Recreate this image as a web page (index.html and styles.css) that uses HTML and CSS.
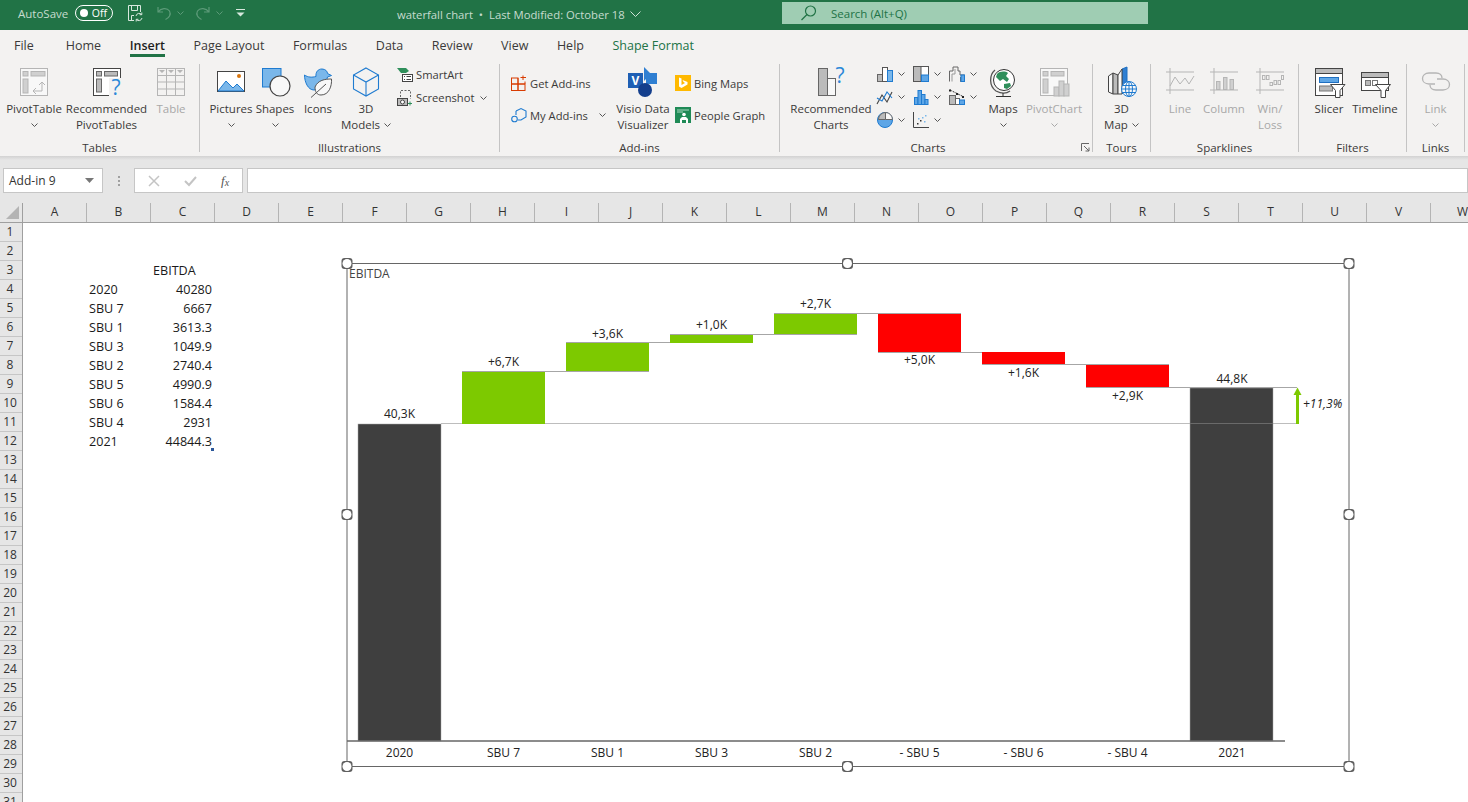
FILE: index.html
```html
<!DOCTYPE html>
<html>

<head lang="en">
    <meta charset="UTF-8">
    <title>waterfall chart</title>
    <link rel="stylesheet" href="styles.css">
</head>

<body>
    <!-- title bar -->
    <div class="titlebar">
        <div class="qat">
            <span class="autosave">AutoSave</span>
            <span class="toggle"><span class="knob"></span><span class="toggle-text">Off</span></span>
            <svg class="qat-save" width="18" height="18" viewBox="0 0 18 18" fill="none" stroke="#d8e8de"><path d="M2.500 1.500H14.500V8M2.500 1.500V16.500H8M5.500 1.500V6.500H11.500V1.500M5.500 16.500V11.500H8"/><path d="M10 12a3.200 3.200 0 0 1 5.600-1.500M16 14a3.200 3.200 0 0 1-5.600 1.500M15.800 8.500v2.200h-2.200M10.200 17.500v-2.200h2.200"/></svg>
            <svg class="qat-undo" width="16" height="16" viewBox="0 0 16 16" fill="none" stroke="#5c9a78" stroke-width="1.2"><path d="M2 2V7H7M2 7C5 3 11 2.500 13.500 6C15.500 9.500 13 13 9.500 14.500"/></svg>
            <svg class="chev-dim" width="7" height="4" viewBox="0 0 7 4" fill="none" stroke="#5c9a78"><path d="M.5.5l3 3 3-3"/></svg>
            <svg class="qat-redo" width="16" height="16" viewBox="0 0 16 16" fill="none" stroke="#5c9a78" stroke-width="1.2"><path d="M14 2V7H9M14 7C11 3 5 2.500 2.500 6C.5 9.500 3 13 6.500 14.500"/></svg>
            <svg class="chev-dim" width="7" height="4" viewBox="0 0 7 4" fill="none" stroke="#5c9a78"><path d="M.5.5l3 3 3-3"/></svg>
            <svg class="qat-more" width="9" height="8" viewBox="0 0 9 8"><path d="M0 .5H9" stroke="#d8e8de"/><path d="M.5 3.500H8.500L4.500 7.500Z" fill="#d8e8de"/></svg>
        </div>
        <div class="doc-title">
            <span>waterfall chart &nbsp;&#8226;&nbsp; Last Modified: October 18</span>
            <svg width="11" height="6" viewBox="0 0 11 6" fill="none" stroke="#cfe2d7"><path d="M.5.5l5 5 5-5"/></svg>
        </div>
        <div class="search">
            <svg width="18" height="18" viewBox="0 0 18 18" fill="none" stroke="#217346" stroke-width="1.2"><circle cx="10.500" cy="7" r="5"/><path d="M7 10.500L1.500 16"/></svg>
            <span>Search (Alt+Q)</span>
        </div>
    </div>

    <!-- tabs -->
    <div class="tabs">
        <span class="tab tab-file">File</span>
        <span class="tab">Home</span>
        <span class="tab tab-active">Insert</span>
        <span class="tab">Page Layout</span>
        <span class="tab">Formulas</span>
        <span class="tab">Data</span>
        <span class="tab">Review</span>
        <span class="tab">View</span>
        <span class="tab">Help</span>
        <span class="tab tab-green">Shape Format</span>
    </div>

    <!-- ribbon -->
    <div class="ribbon">
        <div class="group group-tables">
            <div class="group-body">
                <div class="btn w-pivot">
                    <svg width="32" height="32" viewBox="0 0 32 32"><rect x="2.500" y="2.500" width="27" height="27" fill="#f8f8f8" stroke="#b5b5b5"/><rect x="5" y="5.500" width="5" height="4.500" fill="#d0d0d0" stroke="#b5b5b5"/><rect x="13" y="5.500" width="14" height="4.500" fill="#d0d0d0" stroke="#b5b5b5"/><rect x="5" y="13" width="5" height="14" fill="#d0d0d0" stroke="#b5b5b5"/><path d="M15 25H24V16M21 19l3-3 3 3M18 22l-3 3 3 3" fill="none" stroke="#b5b5b5"/></svg>
                    <span class="label">PivotTable</span>
                    <span class="label"><svg class="chev" width="7" height="4" viewBox="0 0 7 4"><path d="M.5.5l3 3 3-3"/></svg></span>
                </div>
                <div class="btn w-recpivot">
                    <svg width="32" height="32" viewBox="0 0 32 32"><rect x="2.500" y="2.500" width="27" height="27" fill="#fff" stroke="#444"/><rect x="5.500" y="5.500" width="5" height="4.500" fill="#bbb" stroke="#666"/><rect x="13.500" y="5.500" width="13" height="4.500" fill="#bbb" stroke="#666"/><rect x="5.500" y="13" width="5" height="13" fill="#bbb" stroke="#666"/><rect x="18" y="12" width="14" height="20" fill="#f3f2f1"/><text x="25" y="29" class="qmark">?</text></svg>
                    <span class="label">Recommended</span>
                    <span class="label">PivotTables</span>
                </div>
                <div class="btn w-table off">
                    <svg width="32" height="32" viewBox="0 0 32 32" fill="none" stroke="#b5b5b5"><rect x="2.500" y="2.500" width="27" height="27"/><path d="M2.500 9.500H29.500M2.500 16H29.500M2.500 23H29.500M11.500 2.500V29.500M20.500 2.500V29.500"/><path d="M4 4h6l-3 3zM13 4h6l-3 3zM22 4h6l-3 3z" fill="#b5b5b5" stroke="none"/></svg>
                    <span class="label">Table</span>
                </div>
            </div>
            <div class="group-name">Tables</div>
        </div>

        <div class="group group-illus">
            <div class="group-body">
                <div class="btn w-pictures">
                    <svg width="32" height="32" viewBox="0 0 32 32"><rect x="2.500" y="5.500" width="27" height="20" fill="#fff" stroke="#444"/><path d="M3 25L11 15L18 22L22 18L29 25Z" fill="#7ab7ea" stroke="#1f7bd0"/><circle cx="24" cy="10" r="2" fill="#d9760f"/></svg>
                    <span class="label">Pictures</span>
                    <span class="label"><svg class="chev" width="7" height="4" viewBox="0 0 7 4"><path d="M.5.5l3 3 3-3"/></svg></span>
                </div>
                <div class="btn w-shapes">
                    <svg width="32" height="32" viewBox="0 0 32 32"><rect x="3.500" y="2.500" width="18.500" height="18.500" fill="#7ab7ea" stroke="#1f7bd0"/><circle cx="21" cy="20" r="10" fill="#f8f8f8" stroke="#444" stroke-width="1.200"/></svg>
                    <span class="label">Shapes</span>
                    <span class="label"><svg class="chev" width="7" height="4" viewBox="0 0 7 4"><path d="M.5.5l3 3 3-3"/></svg></span>
                </div>
                <div class="btn w-icons">
                    <svg width="32" height="32" viewBox="0 0 32 32"><path d="M2.500 9C6 11.500 10 11.500 14 10.500C13.500 6 16 3 20 3C23.500 3 25.500 5.500 25.500 7.500L29.500 9.500L25.500 11C24.500 16 20 24 12 24C6 24 2.500 16 2.500 9Z" fill="#7ab7ea" stroke="#1f7bd0"/><path d="M13 21C16 14 23 13 29.500 13C30 20 27 29 19 29C15 29 13 26 13 21Z" fill="#f8f8f8" stroke="#555"/><path d="M9 31.500L24 18" stroke="#555" fill="none"/></svg>
                    <span class="label">Icons</span>
                </div>
                <div class="btn w-models">
                    <svg width="32" height="32" viewBox="0 0 32 32" fill="none" stroke="#1f7bd0" stroke-width="1.100"><path d="M16 2L28.500 9V23L16 30L3.500 23V9Z"/><path d="M3.500 9L16 16L28.500 9M16 16V30"/></svg>
                    <span class="label">3D</span>
                    <span class="label">Models <svg class="chev" width="7" height="4" viewBox="0 0 7 4"><path d="M.5.5l3 3 3-3"/></svg></span>
                </div>
                <div class="small-col small-illus">
                    <div class="small">
                        <svg width="16" height="16" viewBox="0 0 16 16"><path d="M0 1H9L12 4L9 6H4L0 1Z" fill="#2f8f5b"/><rect x="5.500" y="7.500" width="10" height="7" fill="#fff" stroke="#444"/><path d="M7 9.500h1M9.500 9.500H14M7 12.500h1M9.500 12.500H14" stroke="#444"/></svg>
                        <span>SmartArt</span>
                    </div>
                    <div class="small">
                        <svg width="16" height="16" viewBox="0 0 16 16" fill="none"><path d="M3.500 7V.5H13.500V9" stroke="#666" stroke-dasharray="2 1.500"/><rect x=".5" y="8.500" width="10" height="7" fill="#bbb" stroke="#444"/><circle cx="5.500" cy="12" r="2" fill="#fff" stroke="#444"/><path d="M13 11.500V15.500M11 13.500H15" stroke="#2f8f5b"/></svg>
                        <span>Screenshot</span>
                        <svg class="chev" width="7" height="4" viewBox="0 0 7 4"><path d="M.5.5l3 3 3-3"/></svg>
                    </div>
                </div>
            </div>
            <div class="group-name">Illustrations</div>
        </div>

        <div class="group group-addins">
            <div class="group-body">
                <div class="small-col small-addins w-myadd">
                    <div class="small">
                        <svg width="16" height="16" viewBox="0 0 16 16" fill="none" stroke="#d83b01"><rect x=".5" y="3" width="6.500" height="6"/><rect x="7" y="9" width="7" height="6.500"/><rect x=".5" y="9" width="6.500" height="6.500"/><path d="M7 3V9H14V6.500M12 .5V5M9.500 2.500H15"/></svg>
                        <span>Get Add-ins</span>
                    </div>
                    <div class="small">
                        <svg width="16" height="16" viewBox="0 0 16 16" fill="none" stroke="#1f7bd0" stroke-width="1.100"><path d="M5 4L10 1.500L15 4V10L10 13H7"/><path d="M5 4V8"/><circle cx="3.500" cy="12" r="2.800"/></svg>
                        <span>My Add-ins</span>
                        <svg class="chev chev-add" width="7" height="4" viewBox="0 0 7 4"><path d="M.5.5l3 3 3-3"/></svg>
                    </div>
                </div>
                <div class="btn w-visio">
                    <svg width="32" height="32" viewBox="0 0 32 32"><path d="M17 1L24 8L17 15Z" fill="#2f7fd2"/><rect x="19" y="7" width="11" height="11" fill="#2f7fd2"/><rect x="1" y="7" width="15" height="15" fill="#1e5fb4"/><circle cx="18" cy="24" r="7" fill="#133e8c"/><text x="8.500" y="19" class="visio-v">V</text></svg>
                    <span class="label">Visio Data</span>
                    <span class="label">Visualizer</span>
                </div>
                <div class="small-col small-addins small-right">
                    <div class="small">
                        <svg width="16" height="16" viewBox="0 0 16 16"><rect width="16" height="16" fill="#ffb900"/><path d="M4 2.500L6.500 3.500V10L10 8L8.500 7L7.500 5L12.500 7V9.500L6.500 13L4 11.500Z" fill="#fff"/></svg>
                        <span>Bing Maps</span>
                    </div>
                    <div class="small">
                        <svg width="16" height="16" viewBox="0 0 16 16"><rect width="16" height="16" fill="#1f8a56"/><path d="M2 3H14M2 5H8" stroke="#a9d8bf"/><circle cx="9" cy="7.500" r="1.800" fill="#fff"/><path d="M5 16V12L7 10H11L13 12V16H11V13H7V16Z" fill="#fff"/></svg>
                        <span>People Graph</span>
                    </div>
                </div>
            </div>
            <div class="group-name">Add-ins</div>
        </div>

        <div class="group group-charts">
            <div class="group-body">
                <div class="btn w-recchart">
                    <svg width="32" height="32" viewBox="0 0 32 32"><rect x="3.500" y="2.500" width="9" height="27" fill="#bbb" stroke="#666"/><rect x="12.500" y="12.500" width="8" height="17" fill="#f8f8f8" stroke="#666"/><text x="25" y="17" class="qmark">?</text></svg>
                    <span class="label">Recommended</span>
                    <span class="label">Charts</span>
                </div>
                <div class="chart-grid">
                    <div class="mini">
                        <svg width="16" height="16" viewBox="0 0 16 16"><rect x=".5" y="8.500" width="5" height="7" fill="#bbb" stroke="#666"/><rect x="5.500" y="1.500" width="5" height="14" fill="#fff" stroke="#555"/><rect x="10.500" y="4.500" width="5" height="11" fill="#7ab7ea" stroke="#1f7bd0"/></svg>
                        <svg class="chev" width="7" height="4" viewBox="0 0 7 4"><path d="M.5.5l3 3 3-3"/></svg>
                    </div>
                    <div class="mini">
                        <svg width="16" height="16" viewBox="0 0 16 16"><rect x=".5" y=".5" width="15" height="15" fill="#fff" stroke="#555"/><rect x="1" y="1" width="7" height="14" fill="#bbb"/><path d="M8 .5V15.500" stroke="#555"/><rect x="8.500" y="9" width="7" height="6.500" fill="#5ea6e6" stroke="#1f7bd0"/></svg>
                        <svg class="chev" width="7" height="4" viewBox="0 0 7 4"><path d="M.5.5l3 3 3-3"/></svg>
                    </div>
                    <div class="mini">
                        <svg width="16" height="16" viewBox="0 0 16 16" fill="none"><path d="M.5 15.500V5H4V1H9V5H11V9H15.500V15.500H11.500V11" stroke="#666"/><path d="M3 15.500V8H6V3" stroke="#999"/><rect x="12" y="9" width="3.500" height="6.500" fill="#5ea6e6" stroke="#1f7bd0"/></svg>
                        <svg class="chev" width="7" height="4" viewBox="0 0 7 4"><path d="M.5.5l3 3 3-3"/></svg>
                    </div>
                    <div class="mini">
                        <svg width="16" height="16" viewBox="0 0 16 16" fill="none"><path d="M0 15L5 6L10 13L15 3" stroke="#444" stroke-width="1.100"/><path d="M0 9L5 12L10 3L15 9" stroke="#1f7bd0" stroke-width="1.100"/><path d="M5 6v.1M10 13v.1M15 3v.1" stroke="#222" stroke-width="2"/></svg>
                        <svg class="chev" width="7" height="4" viewBox="0 0 7 4"><path d="M.5.5l3 3 3-3"/></svg>
                    </div>
                    <div class="mini">
                        <svg width="16" height="16" viewBox="0 0 16 16" fill="#5ea6e6" stroke="#1f7bd0"><rect x="1.500" y="8.500" width="3.500" height="7"/><rect x="5" y="1.500" width="3.500" height="14"/><rect x="8.500" y="5.500" width="3.500" height="10"/><rect x="12" y="10.500" width="3" height="5"/></svg>
                        <svg class="chev" width="7" height="4" viewBox="0 0 7 4"><path d="M.5.5l3 3 3-3"/></svg>
                    </div>
                    <div class="mini">
                        <svg width="16" height="16" viewBox="0 0 16 16" fill="none"><rect x=".5" y="6.500" width="6" height="9" fill="#bbb" stroke="#666"/><rect x="6.500" y="9.500" width="4" height="6" fill="#fff" stroke="#666"/><rect x="10.500" y="11" width="5" height="4.500" fill="#5ea6e6" stroke="#1f7bd0"/><path d="M1 1L15 8" stroke="#333" stroke-dasharray="2 1"/><path d="M1 .5v2M8 4v2M14 7v2" stroke="#222" stroke-width="2"/></svg>
                        <svg class="chev" width="7" height="4" viewBox="0 0 7 4"><path d="M.5.5l3 3 3-3"/></svg>
                    </div>
                    <div class="mini">
                        <svg width="16" height="16" viewBox="0 0 16 16"><circle cx="8" cy="8" r="7.500" fill="#5ea6e6" stroke="#1f7bd0"/><path d="M8.500 7.500V.5A7 7 0 0 0 1.500 7.500Z" fill="#bbb" stroke="#666"/><path d="M8.500 7.500V.5A7 7 0 0 1 15.500 7.500Z" fill="#f8f8f8" stroke="#666"/></svg>
                        <svg class="chev" width="7" height="4" viewBox="0 0 7 4"><path d="M.5.5l3 3 3-3"/></svg>
                    </div>
                    <div class="mini">
                        <svg width="16" height="16" viewBox="0 0 16 16"><path d="M.5 0V15.500H16" fill="none" stroke="#444"/><path d="M4 11h1.500v1.500H4zM7 8h1.500v1.500H7z" fill="#333"/><path d="M9 5h1.500v1.500H9zM12 3h1.500v1.500H12zM11 9h1.500v1.500H11zM5 6h1.500v1.500H5z" fill="#7ab7ea"/></svg>
                        <svg class="chev" width="7" height="4" viewBox="0 0 7 4"><path d="M.5.5l3 3 3-3"/></svg>
                    </div>
                </div>
                <div class="btn w-maps">
                    <svg width="32" height="32" viewBox="0 0 32 32"><circle cx="17" cy="14" r="10.500" fill="#fff" stroke="#333"/><path d="M10 8C13 5 18 5 21 7L19 10L22 13L20 16L16 13L13 15L9 11Z" fill="#2f8f5b"/><path d="M17 18L23 17L24 20L20 23L17 22Z" fill="#2f8f5b"/><path d="M8 4C2 9 2 20 9 25C13 27 19 28 23 25" fill="none" stroke="#555" stroke-width="1.300"/><path d="M16 27V30M9 30.500H24" stroke="#333"/></svg>
                    <span class="label">Maps</span>
                    <span class="label"><svg class="chev" width="7" height="4" viewBox="0 0 7 4"><path d="M.5.5l3 3 3-3"/></svg></span>
                </div>
                <div class="btn w-pivchart off">
                    <svg width="32" height="32" viewBox="0 0 32 32"><rect x="2.500" y="2.500" width="27" height="27" fill="#f8f8f8" stroke="#b5b5b5"/><rect x="5" y="5.500" width="5" height="4.500" fill="#d0d0d0" stroke="#b5b5b5"/><rect x="13" y="5.500" width="13" height="4.500" fill="#d0d0d0" stroke="#b5b5b5"/><rect x="5" y="13" width="5" height="14" fill="#d0d0d0" stroke="#b5b5b5"/><rect x="16" y="21" width="5" height="9" fill="#d0d0d0" stroke="#b5b5b5"/><rect x="21" y="15" width="5" height="15" fill="#d0d0d0" stroke="#b5b5b5"/><rect x="26" y="18" width="5" height="12" fill="#d0d0d0" stroke="#b5b5b5"/></svg>
                    <span class="label">PivotChart</span>
                    <span class="label"><svg class="chev" width="7" height="4" viewBox="0 0 7 4"><path d="M.5.5l3 3 3-3"/></svg></span>
                </div>
            </div>
            <div class="group-name">Charts</div>
            <svg class="launcher" width="9" height="9" viewBox="0 0 9 9" fill="none" stroke="#666"><path d="M.5 8V.5H8M3 3L8 8M8 4.500V8H4.500"/></svg>
        </div>

        <div class="group group-tours">
            <div class="group-body">
                <div class="btn w-3dmap">
                    <svg width="32" height="32" viewBox="0 0 32 32"><path d="M2.500 10L7 7V28L2.500 26Z" fill="#f8f8f8" stroke="#444"/><path d="M7 7L12 9V28L7 28Z" fill="#bbb" stroke="#444"/><path d="M16 3L21 1V22L16 28Z" fill="#2f7fd2" stroke="#1f6fc0"/><path d="M12 9L16 3V28H12Z" fill="#f8f8f8" stroke="#444"/><circle cx="23" cy="23" r="7.500" fill="#f8f8f8" stroke="#1f7bd0"/><path d="M15.500 23H30.500M16.500 19.500H29.500M16.500 26.500H29.500M23 15.500V30.500" stroke="#1f7bd0" fill="none"/><ellipse cx="23" cy="23" rx="3.500" ry="7.500" fill="none" stroke="#1f7bd0"/></svg>
                    <span class="label">3D</span>
                    <span class="label">Map <svg class="chev" width="7" height="4" viewBox="0 0 7 4"><path d="M.5.5l3 3 3-3"/></svg></span>
                </div>
            </div>
            <div class="group-name">Tours</div>
        </div>

        <div class="group group-spark">
            <div class="group-body">
                <div class="btn w-line off">
                    <svg width="32" height="32" viewBox="0 0 32 32" fill="none" stroke="#b5b5b5"><path d="M6 2V28M2 6H30M2 24H30"/><path d="M6 20L11 11L16 18L21 12L25 18L30 10"/></svg>
                    <span class="label">Line</span>
                </div>
                <div class="btn w-column off">
                    <svg width="32" height="32" viewBox="0 0 32 32" fill="none" stroke="#b5b5b5"><path d="M6 2V28M2 6H30M2 24H30"/><rect x="8.500" y="15.500" width="3.500" height="8" fill="#d0d0d0"/><rect x="15.500" y="11.500" width="3.500" height="12" fill="#d0d0d0"/><rect x="22" y="13.500" width="3.500" height="10" fill="#d0d0d0"/></svg>
                    <span class="label">Column</span>
                </div>
                <div class="btn w-winloss off">
                    <svg width="32" height="32" viewBox="0 0 32 32" fill="none" stroke="#b5b5b5"><path d="M6 2V28M2 6H30M2 24H30"/><rect x="8.500" y="9.500" width="2.500" height="4"/><rect x="12.500" y="9.500" width="2.500" height="4"/><rect x="16" y="16.500" width="2.500" height="3"/><rect x="20" y="14.500" width="2.500" height="4"/><rect x="24" y="14.500" width="2.500" height="4"/><rect x="27.500" y="9.500" width="2" height="4"/></svg>
                    <span class="label">Win/</span>
                    <span class="label">Loss</span>
                </div>
            </div>
            <div class="group-name">Sparklines</div>
        </div>

        <div class="group group-filters">
            <div class="group-body">
                <div class="btn w-slicer">
                    <svg width="32" height="32" viewBox="0 0 32 32"><rect x="2.500" y="2.500" width="27" height="27" fill="#fff" stroke="#444"/><rect x="3" y="3" width="26" height="4" fill="#bbb"/><path d="M2.500 7.500H29.500" stroke="#444"/><rect x="6.500" y="11.500" width="19" height="5" fill="#5ea6e6" stroke="#1f6fc0"/><rect x="6.500" y="20" width="13" height="5" fill="#bbb" stroke="#777"/><path d="M17.500 18.500H32L27 24.500V31.500H22.500V24.500Z" fill="#fff" stroke="#444"/></svg>
                    <span class="label">Slicer</span>
                </div>
                <div class="btn w-timeline">
                    <svg width="32" height="32" viewBox="0 0 32 32"><rect x="2.500" y="6.500" width="27" height="18" fill="#fff" stroke="#444"/><rect x="3" y="7" width="26" height="4" fill="#bbb"/><path d="M2.500 11.500H29.500" stroke="#444"/><rect x="6.500" y="14.500" width="5" height="5" fill="#bbb" stroke="#777"/><rect x="13.500" y="14.500" width="5" height="5" fill="#fff" stroke="#777"/><path d="M16.500 18.500H31.500L26.500 24.500V31.500H22V24.500Z" fill="#fff" stroke="#444"/></svg>
                    <span class="label">Timeline</span>
                </div>
            </div>
            <div class="group-name">Filters</div>
        </div>

        <div class="group group-links">
            <div class="group-body">
                <div class="btn w-link off">
                    <svg width="32" height="32" viewBox="0 0 32 32" fill="none" stroke="#b5b5b5" stroke-width="1.300"><path d="M15 18H9C5 18 2.500 15.500 2.500 12.500C2.500 9.500 5 7 9 7H16C20 7 22 9.500 22 12"/><path d="M17 13H23C27 13 29.500 15.500 29.500 18.500C29.500 21.500 27 24 23 24H16C12 24 10 21.500 10 19"/></svg>
                    <span class="label">Link</span>
                    <span class="label"><svg class="chev" width="7" height="4" viewBox="0 0 7 4"><path d="M.5.5l3 3 3-3"/></svg></span>
                </div>
            </div>
            <div class="group-name">Links</div>
        </div>
    </div>
    <div class="ribbon-shadow"></div>

    <!-- formula bar -->
    <div class="formula-row">
        <div class="namebox">
            <span>Add-in 9</span>
            <svg width="9" height="5" viewBox="0 0 9 5"><path d="M0 0H9L4.500 5Z" fill="#777"/></svg>
        </div>
        <div class="grip"><i></i><i></i><i></i></div>
        <div class="fx-box">
            <svg width="12" height="12" viewBox="0 0 12 12" fill="none" stroke="#c4c4c4" stroke-width="1.500"><path d="M1 1L11 11M11 1L1 11"/></svg>
            <svg width="13" height="12" viewBox="0 0 13 12" fill="none" stroke="#c4c4c4" stroke-width="2"><path d="M1 6L5 10L12 2"/></svg>
            <span class="fx">f<sub>x</sub></span>
        </div>
        <div class="formula-input"></div>
    </div>

    <!-- sheet -->
    <div class="col-heads">
        <div class="corner"><svg width="13" height="13" viewBox="0 0 13 13"><path d="M13 0V13H0Z" fill="#b4b4b4"/></svg></div>
        <span class="col">A</span><span class="col">B</span><span class="col">C</span><span class="col">D</span><span class="col">E</span><span class="col">F</span><span class="col">G</span><span class="col">H</span><span class="col">I</span><span class="col">J</span><span class="col">K</span><span class="col">L</span><span class="col">M</span><span class="col">N</span><span class="col">O</span><span class="col">P</span><span class="col">Q</span><span class="col">R</span><span class="col">S</span><span class="col">T</span><span class="col">U</span><span class="col">V</span><span class="col">W</span>
    </div>
    <div class="sheet">
        <div class="row-heads">
            <span>1</span><span>2</span><span>3</span><span>4</span><span>5</span><span>6</span><span>7</span><span>8</span><span>9</span><span>10</span><span>11</span><span>12</span><span>13</span><span>14</span><span>15</span><span>16</span><span>17</span><span>18</span><span>19</span><span>20</span><span>21</span><span>22</span><span>23</span><span>24</span><span>25</span><span>26</span><span>27</span><span>28</span><span>29</span><span>30</span><span>31</span>
        </div>
        <div class="cells">
            <div class="data">
                <span></span><span class="text">EBITDA</span>
                <span class="text">2020</span><span class="num">40280</span>
                <span class="text">SBU 7</span><span class="num">6667</span>
                <span class="text">SBU 1</span><span class="num">3613.3</span>
                <span class="text">SBU 3</span><span class="num">1049.9</span>
                <span class="text">SBU 2</span><span class="num">2740.4</span>
                <span class="text">SBU 5</span><span class="num">4990.9</span>
                <span class="text">SBU 6</span><span class="num">1584.4</span>
                <span class="text">SBU 4</span><span class="num">2931</span>
                <span class="text">2021</span><span class="num fill-cell">44844.3</span>
            </div>
        </div>
    </div>

    <!-- chart sits on top of the sheet, drawn in page coordinates -->
    <svg class="chart" width="1030" height="530" viewBox="335 250 1030 530">
        <rect x="347" y="263.500" width="1002" height="503" class="frame"/>

        <path d="M441 423.500H1297" class="base-line"/>
        <g class="links">
            <path d="M462 371.500H649"/>
            <path d="M566 342.500H753"/>
            <path d="M670 334.500H857"/>
            <path d="M774 313.500H961"/>
            <path d="M878 352.500H1065"/>
            <path d="M982 364.500H1169"/>
            <path d="M1086 387.500H1297"/>
        </g>

        <rect x="358" y="424" width="83" height="317" class="total"/>
        <rect x="462" y="372" width="83" height="52" class="up"/>
        <rect x="566" y="343" width="83" height="28" class="up"/>
        <rect x="670" y="335" width="83" height="8" class="up"/>
        <rect x="774" y="314" width="83" height="20" class="up"/>
        <rect x="878" y="314" width="83" height="38" class="down"/>
        <rect x="982" y="352" width="83" height="12" class="down"/>
        <rect x="1086" y="365" width="83" height="22" class="down"/>
        <rect x="1190" y="388" width="83" height="353" class="total"/>
        <path d="M1190 423.500H1273" class="over-bar"/>

        <path d="M1285 741H347" class="axis"/>
        <path d="M1297.500 424V392" class="arrow-line"/>
        <path d="M1293.500 395L1297.500 387.500L1301.500 395Z" class="arrow-head"/>

        <text x="349" y="278" class="chart-title">EBITDA</text>

        <g class="value">
            <text x="399.500" y="418">40,3K</text>
            <text x="503.500" y="366">+6,7K</text>
            <text x="607.500" y="338">+3,6K</text>
            <text x="711.500" y="329">+1,0K</text>
            <text x="815.500" y="308">+2,7K</text>
            <text x="919.500" y="364">+5,0K</text>
            <text x="1023.500" y="377">+1,6K</text>
            <text x="1127.500" y="400">+2,9K</text>
            <text x="1232" y="383">44,8K</text>
        </g>
        <text x="1303" y="408" class="delta">+11,3%</text>

        <g class="value">
            <text x="399.500" y="757">2020</text>
            <text x="503.500" y="757">SBU 7</text>
            <text x="607.500" y="757">SBU 1</text>
            <text x="711.500" y="757">SBU 3</text>
            <text x="815.500" y="757">SBU 2</text>
            <text x="919.500" y="757">- SBU 5</text>
            <text x="1023.500" y="757">- SBU 6</text>
            <text x="1127.500" y="757">- SBU 4</text>
            <text x="1232" y="757">2021</text>
        </g>

        <g class="handle" transform="translate(347 263.500)"><rect x="-5.500" y="-5.500" width="11" height="11" rx="3"/><circle r="4.500"/></g>
        <g class="handle" transform="translate(847.500 263.500)"><rect x="-5.500" y="-5.500" width="11" height="11" rx="3"/><circle r="4.500"/></g>
        <g class="handle" transform="translate(1349 263.500)"><rect x="-5.500" y="-5.500" width="11" height="11" rx="3"/><circle r="4.500"/></g>
        <g class="handle" transform="translate(347 514.500)"><rect x="-5.500" y="-5.500" width="11" height="11" rx="3"/><circle r="4.500"/></g>
        <g class="handle" transform="translate(1349 514.500)"><rect x="-5.500" y="-5.500" width="11" height="11" rx="3"/><circle r="4.500"/></g>
        <g class="handle" transform="translate(347 766.500)"><rect x="-5.500" y="-5.500" width="11" height="11" rx="3"/><circle r="4.500"/></g>
        <g class="handle" transform="translate(847.500 766.500)"><rect x="-5.500" y="-5.500" width="11" height="11" rx="3"/><circle r="4.500"/></g>
        <g class="handle" transform="translate(1349 766.500)"><rect x="-5.500" y="-5.500" width="11" height="11" rx="3"/><circle r="4.500"/></g>
    </svg>
</body>

</html>
```

FILE: styles.css
```css
* {
    box-sizing: border-box;
}

html,
body {
    margin: 0;
    height: 802px;
    overflow: hidden;
}

body {
    position: relative;
    background: #ffffff;
    color: #3b3a39;
    font-family: "Open Sans", "Noto Sans", sans-serif;
    font-size: 11.5px;
}

svg {
    display: block;
    flex: none;
    overflow: visible;
}

/* title bar */
.titlebar {
    display: flex;
    height: 30px;
    background: #217346;
    color: #c6dccf;
}

.qat {
    display: flex;
    align-items: center;
    width: 397px;
    height: 26px;
    padding-left: 18px;
}

.autosave {
    width: 57px;
}

.toggle {
    display: flex;
    align-items: center;
    justify-content: space-between;
    width: 38px;
    height: 16px;
    padding: 0 5px 0 4px;
    border: 1px solid #ffffff;
    border-radius: 8px;
    color: #ffffff;
    font-size: 10.5px;
}

.knob {
    width: 8px;
    height: 8px;
    border-radius: 50%;
    background: #ffffff;
}

.qat-save {
    margin-left: 13px;
}

.qat-undo {
    margin-left: 12px;
}

.chev-dim {
    margin-left: 5px;
}

.qat-redo {
    margin-left: 11px;
}

.qat-more {
    margin-left: 13px;
}

.doc-title {
    display: flex;
    align-items: center;
    gap: 5px;
    width: 385px;
    height: 28px;
    font-size: 11.3px;
}

.search {
    display: flex;
    align-items: center;
    gap: 13px;
    width: 366px;
    height: 22px;
    margin-top: 2px;
    padding-left: 18px;
    background: #9fcdb3;
    color: #217346;
}

/* tabs */
.tabs {
    display: flex;
    height: 34px;
    padding-left: 14px;
    background: #f3f2f1;
    font-size: 12.5px;
}

.tab {
    position: relative;
    height: 25px;
    margin-right: 28.5px;
    line-height: 31px;
}

.tab-file {
    margin-right: 32px;
}

.tab-active {
    color: #1e1e1e;
    font-weight: 600;
}

.tab-active::after {
    content: "";
    position: absolute;
    left: 0;
    right: 0;
    bottom: -2px;
    height: 3px;
    background: #217346;
}

.tab-green {
    color: #217346;
}

/* ribbon */
.ribbon {
    display: flex;
    height: 92px;
    background: #f3f2f1;
}

.ribbon-shadow {
    height: 4px;
    background: linear-gradient(#d2d2d2, #e6e6e6);
}

.group {
    position: relative;
    height: 88px;
    border-right: 1px solid #c4c4c4;
}

.group-tables {
    width: 200px;
}

.group-tables .group-body {
    padding-left: 6px;
}

.group-illus {
    width: 300px;
}

.group-illus .group-body {
    padding-left: 8px;
}

.group-addins {
    width: 280px;
}

.group-addins .group-body {
    padding-left: 11px;
}

.group-charts {
    width: 313px;
}

.group-charts .group-body {
    padding-left: 10px;
}

.group-charts .group-name {
    padding-right: 16px;
}

.group-tours {
    width: 58px;
}

.group-spark {
    width: 148px;
}

.group-spark .group-body {
    padding-left: 7px;
}

.group-filters {
    width: 108px;
}

.group-filters .group-body {
    padding-left: 7px;
}

.group-links {
    width: 58px;
}

.group-body {
    display: flex;
    height: 76px;
}

.group-name {
    height: 12px;
    line-height: 16px;
    text-align: center;
    white-space: nowrap;
}

.launcher {
    position: absolute;
    left: 301px;
    top: 79px;
}

.btn {
    display: flex;
    flex: none;
    flex-direction: column;
    align-items: center;
    padding-top: 2px;
}

.btn svg:first-child {
    margin-bottom: 3px;
}

.label {
    display: flex;
    align-items: center;
    gap: 4px;
    height: 16px;
    line-height: 16px;
    white-space: nowrap;
}

.label svg:first-child {
    margin-bottom: 0;
}

.off {
    color: #a8a8a8;
}

.off .chev path {
    stroke: #a8a8a8;
}

.chev {
    fill: none;
}

.chev path {
    stroke: #555555;
}

.w-pivot {
    width: 56px;
}

.w-recpivot {
    width: 89px;
}

.w-table {
    width: 40px;
}

.w-pictures {
    width: 46px;
}

.w-shapes {
    width: 42px;
}

.w-icons {
    width: 44px;
}

.w-models {
    width: 52px;
}

.w-myadd {
    width: 106px;
}

.w-visio {
    width: 52px;
}

.w-recchart {
    width: 82px;
}

.w-maps {
    width: 42px;
}

.w-pivchart {
    width: 60px;
}

.w-3dmap {
    width: 57px;
}

.w-line {
    width: 44px;
}

.w-column {
    width: 44px;
}

.w-winloss {
    width: 48px;
}

.w-slicer {
    width: 46px;
}

.w-timeline {
    width: 46px;
}

.w-link {
    width: 57px;
}

.small-col {
    display: flex;
    flex-direction: column;
    font-size: 11.2px;
}

.small-illus {
    margin-top: -1px;
    padding-left: 5px;
}

.small-addins {
    gap: 8px;
    margin-top: -1px;
    padding-top: 8px;
}

.small-right {
    padding-left: 6px;
}

.small {
    display: flex;
    align-items: center;
    gap: 3px;
    white-space: nowrap;
}

.small-illus .small {
    height: 23px;
}

.small-addins .small {
    height: 24px;
}

.small .chev {
    margin-left: 3px;
}

.small .chev-add {
    margin-left: 8px;
}

.chart-grid {
    display: grid;
    flex: none;
    grid-template-columns: repeat(3, 36px);
    grid-auto-rows: 23px;
    width: 105px;
    margin: -2px 0 0 5px;
}

.mini {
    display: flex;
    align-items: center;
    gap: 5px;
}

.qmark {
    fill: #2b88d8;
    font-family: "Open Sans", sans-serif;
    font-size: 21px;
    text-anchor: middle;
}

.visio-v {
    fill: #ffffff;
    font-family: "Open Sans", sans-serif;
    font-size: 12px;
    font-weight: 700;
    text-anchor: middle;
}

/* formula bar */
.formula-row {
    display: flex;
    height: 38px;
    padding: 8px 0 0 3px;
    background: #e6e6e6;
}

.namebox {
    display: flex;
    align-items: center;
    justify-content: space-between;
    width: 100px;
    height: 25px;
    padding: 0 8px 0 5px;
    border: 1px solid #c6c6c6;
    background: #ffffff;
    color: #333333;
    font-size: 12px;
}

.grip {
    display: flex;
    flex-direction: column;
    align-items: center;
    justify-content: center;
    gap: 2px;
    width: 31px;
    height: 25px;
}

.grip i {
    width: 2px;
    height: 2px;
    background: #a0a0a0;
}

.fx-box {
    display: flex;
    align-items: center;
    gap: 24px;
    width: 109px;
    height: 25px;
    padding-left: 13px;
    border: 1px solid #c6c6c6;
    background: #ffffff;
}

.fx {
    color: #555555;
    font-family: "Liberation Serif", serif;
    font-size: 13px;
    font-style: italic;
}

.fx sub {
    font-size: 10px;
    vertical-align: -1px;
}

.formula-input {
    flex: 1;
    height: 25px;
    margin-left: 4px;
    border: 1px solid #c6c6c6;
    background: #ffffff;
}

/* sheet */
.col-heads {
    display: flex;
    height: 25px;
    padding-top: 5px;
    border-bottom: 1px solid #9f9f9f;
    background: #e6e6e6;
    overflow: hidden;
    color: #333333;
    font-size: 12px;
}

.corner {
    flex: none;
    width: 23px;
    height: 19px;
    padding: 3px 0 0 6px;
    border-right: 1px solid #9f9f9f;
}

.col {
    flex: none;
    width: 64px;
    border-right: 1px solid #b4b4b4;
    line-height: 18px;
    text-align: center;
}

.sheet {
    display: flex;
}

.row-heads {
    display: flex;
    flex: none;
    flex-direction: column;
    width: 23px;
    border-right: 1px solid #9f9f9f;
    background: #e6e6e6;
    color: #333333;
    font-size: 12px;
}

.row-heads span {
    height: 19px;
    padding-right: 2px;
    border-bottom: 1px solid #c6c6c6;
    line-height: 18px;
    text-align: center;
}

.cells {
    flex: 1;
    padding: 38px 0 0 64px;
    color: #1a1a1a;
    font-size: 12.600px;
}

.data {
    display: grid;
    grid-template-columns: 64px 64px;
    grid-auto-rows: 19px;
    line-height: 19px;
}

.text {
    padding-left: 2px;
}

.num {
    position: relative;
    padding-right: 3px;
    text-align: right;
}

.fill-cell::after {
    content: "";
    position: absolute;
    right: 1px;
    bottom: 0;
    width: 3px;
    height: 3px;
    background: #2b579a;
}

/* chart */
.chart {
    position: absolute;
    left: 335px;
    top: 250px;
    font-size: 12px;
}

.frame {
    fill: none;
    stroke: #666666;
}

.base-line {
    stroke: #bdbdbd;
}

.links path {
    fill: none;
    stroke: #a6a6a6;
}

.total {
    fill: #3f3f3f;
    stroke: #a6a6a6;
    stroke-width: 0.5;
}

.up {
    fill: #7dc900;
}

.down {
    fill: #ff0000;
}

.over-bar {
    stroke: #6a6a6a;
}

.axis {
    stroke: #666666;
    stroke-width: 1.5;
}

.arrow-line {
    stroke: #7dc900;
    stroke-width: 3;
}

.arrow-head {
    fill: #7dc900;
}

.chart-title {
    fill: #444444;
}

.value text {
    fill: #222222;
    text-anchor: middle;
}

.delta {
    fill: #222222;
    font-style: italic;
}

.handle rect {
    fill: #5f5f5f;
}

.handle circle {
    fill: #ffffff;
}
```
